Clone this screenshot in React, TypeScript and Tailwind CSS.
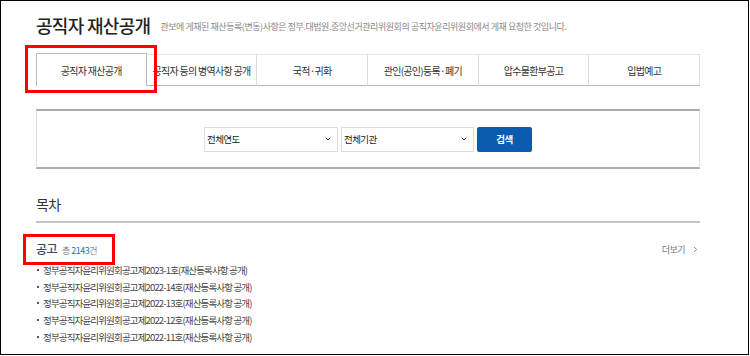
import { ChevronDown, ChevronRight } from "lucide-react";

const tabs = [
  "공직자 재산공개",
  "공직자 등의 병역사항 공개",
  "국적·귀화",
  "관인(공인)등록·폐기",
  "압수물환부공고",
  "입법예고",
];

const notices = [
  "정부공직자윤리위원회공고제2023-1호(재산등록사항 공개)",
  "정부공직자윤리위원회공고제2022-14호(재산등록사항 공개)",
  "정부공직자윤리위원회공고제2022-13호(재산등록사항 공개)",
  "정부공직자윤리위원회공고제2022-12호(재산등록사항 공개)",
  "정부공직자윤리위원회공고제2022-11호(재산등록사항 공개)",
];

export default function App() {
  return (
    <div
      className="relative w-[749px] h-[355px] border border-black bg-white overflow-hidden"
      style={{ fontFamily: '"Noto Sans CJK KR", "Noto Sans", sans-serif' }}
    >
      <div className="ml-[35px] w-[664px]">
        {/* Title */}
        <div className="flex items-end pt-[9px] h-[36px]">
          <h1 className="text-[18px] leading-[24px] tracking-[-0.7px] text-[#222] font-medium whitespace-nowrap">
            공직자 재산공개
          </h1>
          <p className="ml-[10px] mb-[4px] text-[9px] leading-[12px] tracking-[-0.45px] text-[#888] whitespace-nowrap">
            관보에 게재된 재산등록(변동)사항은 정부.대법원.중앙선거관리위원회의 공직자윤리위원회에서 게재 요청한 것입니다.
          </p>
        </div>

        {/* Tabs */}
        <div className="grid grid-cols-6 mt-[16px] h-[33px]">
          {tabs.map((t, i) =>
            i === 0 ? (
              <div
                key={t}
                className="flex items-center justify-center border-l border-t border-r border-[#bbb] text-[10px] tracking-[-0.7px] text-[#333] whitespace-nowrap"
              >
                {t}
              </div>
            ) : (
              <div
                key={t}
                className="flex items-center justify-center mt-[1px] border-t border-t-[#e4e4e4] border-b border-b-[#bbb] border-r border-r-[#ddd] text-[10px] tracking-[-0.7px] text-[#333] whitespace-nowrap"
              >
                {t}
              </div>
            )
          )}
        </div>

        {/* Search box */}
        <div className="mt-[23px] h-[60px] border-y-2 border-y-[#aaa] border-x border-x-[#ddd] flex items-center justify-center gap-[3px]">
          <div className="w-[134px] h-[25px] border border-[#ddd] flex items-center justify-between pl-[2px] pr-[5px] text-[9.5px] tracking-[-0.6px] text-[#222]">
            <span>전체연도</span>
            <ChevronDown size={8} strokeWidth={3} className="text-[#444]" />
          </div>
          <div className="w-[133px] h-[25px] border border-[#ddd] flex items-center justify-between pl-[2px] pr-[5px] text-[9.5px] tracking-[-0.6px] text-[#222]">
            <span>전체기관</span>
            <ChevronDown size={8} strokeWidth={3} className="text-[#444]" />
          </div>
          <button className="w-[55px] h-[25px] rounded-[2px] bg-[#0b5cb0] text-white text-[9.5px] font-bold tracking-[-0.5px]">
            검색
          </button>
        </div>

        {/* 목차 */}
        <div className="mt-[26px] pb-[8px] border-b-2 border-[#c4c4c4]">
          <h2 className="text-[14px] leading-[18px] tracking-[-0.6px] text-[#333]">목차</h2>
        </div>

        {/* 공고 */}
        <div className="mt-[18px] flex items-center justify-between">
          <div className="flex items-baseline">
            <span className="text-[12px] leading-[16px] tracking-[-0.6px] text-[#3b4a66] font-medium">공고</span>
            <span className="ml-[5px] text-[9px] tracking-[-0.5px] text-[#888]">
              총 <span className="text-[#2b6cc0]">2143</span>건
            </span>
          </div>
          <div className="flex items-center text-[9px] tracking-[-0.5px] text-[#777]">
            <span>더보기</span>
            <ChevronRight size={9} strokeWidth={2} className="ml-[6px] text-[#666]" />
          </div>
        </div>

        <ul className="mt-[4px]">
          {notices.map((n) => (
            <li key={n} className="flex items-center h-[16.75px] text-[9.5px] tracking-[-0.85px] text-[#444] whitespace-pre">
              <span className="w-[2px] h-[2px] bg-[#555] mr-[4px] ml-[1px]" />
              {n}
            </li>
          ))}
        </ul>
      </div>

      {/* Red annotation boxes */}
      <div className="absolute left-[24px] top-[44px] w-[132px] h-[48px] border-[3px] border-[#f00]" />
      <div className="absolute left-[22px] top-[233px] w-[92px] h-[31px] border-[3px] border-[#f00]" />
    </div>
  );
}
